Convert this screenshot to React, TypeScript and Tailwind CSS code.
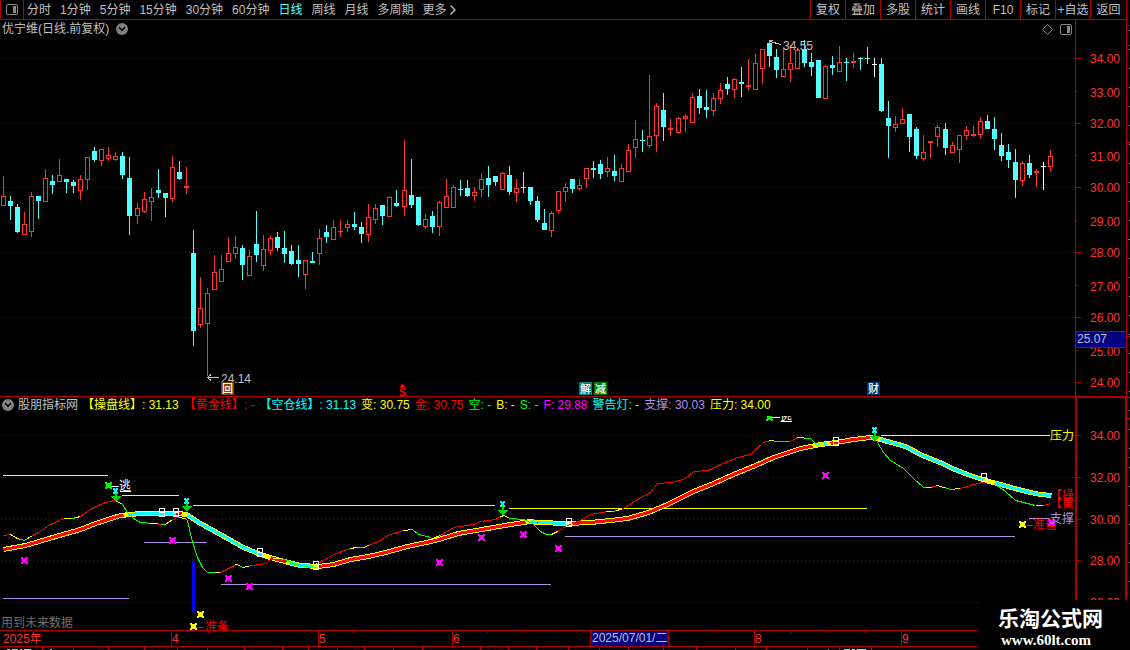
import { ChevronDown, ChevronRight } from "lucide-react";

type Point = [number, number];
type Segment = [number, number, string];
// x, high, low, body top, body bottom, kind (u = up, d = down, f = flat)
type Candle = [number, number, number, number, number, "u" | "d" | "f"];

const RED = "#ff3232";
const LINE = "#b00000";
const CYAN = "#54ffff";
const VIOLET = "#b090e8";

const periods = [
  "分时",
  "1分钟",
  "5分钟",
  "15分钟",
  "30分钟",
  "60分钟",
  "日线",
  "周线",
  "月线",
  "多周期",
];

const tools = ["复权", "叠加", "多股", "统计", "画线", "F10", "标记", "+自选", "返回"];

const readings = [
  { label: "【操盘线】", value: "31.13", color: "text-[#ffff00]" },
  { label: "【黄金线】", value: "-", color: "text-[#ff0000]" },
  { label: "【空仓线】", value: "31.13", color: "text-[#00ffff]" },
  { label: "变", value: "30.75", color: "text-[#ffff00]" },
  { label: "金", value: "30.75", color: "text-[#ff0000]" },
  { label: "空", value: "-", color: "text-[#00ff00]" },
  { label: "B", value: "-", color: "text-[#ffff00]" },
  { label: "S", value: "-", color: "text-[#00ff00]" },
  { label: "F", value: "29.88", color: "text-[#ff00ff]" },
  { label: "警告灯", value: "-", color: "text-[#00ffff]" },
  { label: "支撑", value: "30.03", color: "text-[#b090e8]" },
  { label: "压力", value: "34.00", color: "text-[#ffff00]" },
];

const candles: Candle[] = [
  [3, 176, 206, 196, 206, "u"],
  [10, 196, 220, 201, 206, "d"],
  [17, 204, 233, 207, 232, "d"],
  [24, 212, 235, 224, 235, "u"],
  [31, 192, 237, 196, 232, "u"],
  [38, 196, 219, 196, 201, "d"],
  [45, 169, 202, 178, 202, "u"],
  [52, 175, 194, 181, 185, "d"],
  [59, 159, 182, 175, 182, "u"],
  [66, 179, 193, 179, 182, "d"],
  [73, 180, 193, 182, 186, "d"],
  [80, 175, 200, 179, 191, "u"],
  [87, 157, 190, 157, 180, "u"],
  [94, 147, 162, 151, 160, "d"],
  [101, 149, 166, 149, 161, "u"],
  [108, 147, 161, 155, 159, "u"],
  [115, 152, 161, 156, 160, "u"],
  [122, 152, 179, 156, 175, "d"],
  [129, 157, 235, 178, 216, "d"],
  [137, 203, 224, 208, 216, "u"],
  [144, 192, 213, 199, 212, "u"],
  [151, 188, 221, 197, 202, "u"],
  [158, 169, 198, 190, 193, "d"],
  [165, 193, 217, 193, 198, "d"],
  [172, 156, 202, 167, 199, "u"],
  [179, 161, 180, 172, 179, "d"],
  [186, 167, 194, 186, 188, "u"],
  [193, 230, 346, 253, 331, "d"],
  [200, 277, 328, 308, 325, "u"],
  [207, 288, 376, 293, 324, "u"],
  [214, 255, 290, 272, 290, "u"],
  [221, 255, 282, 269, 282, "u"],
  [228, 237, 262, 253, 262, "u"],
  [235, 236, 259, 247, 254, "u"],
  [242, 245, 280, 248, 265, "d"],
  [249, 250, 276, 256, 276, "u"],
  [256, 211, 262, 244, 255, "d"],
  [263, 235, 271, 249, 266, "u"],
  [270, 236, 255, 238, 251, "u"],
  [277, 232, 251, 237, 248, "d"],
  [284, 231, 263, 248, 254, "d"],
  [291, 245, 265, 251, 264, "d"],
  [298, 245, 277, 260, 264, "d"],
  [305, 260, 289, 260, 275, "u"],
  [312, 252, 263, 261, 263, "d"],
  [319, 229, 265, 238, 254, "u"],
  [326, 225, 243, 232, 237, "d"],
  [333, 220, 240, 227, 240, "u"],
  [340, 220, 237, 231, 232, "u"],
  [347, 220, 232, 224, 228, "u"],
  [354, 212, 230, 224, 227, "d"],
  [361, 222, 243, 227, 234, "d"],
  [368, 204, 242, 217, 235, "u"],
  [375, 204, 224, 208, 220, "u"],
  [382, 205, 225, 205, 216, "d"],
  [389, 196, 217, 197, 217, "u"],
  [396, 190, 207, 203, 206, "d"],
  [404, 140, 216, 190, 207, "u"],
  [411, 159, 208, 195, 205, "d"],
  [418, 197, 226, 197, 225, "d"],
  [425, 214, 229, 219, 227, "u"],
  [432, 211, 233, 216, 227, "d"],
  [439, 201, 236, 202, 227, "u"],
  [446, 179, 208, 196, 208, "u"],
  [453, 185, 208, 187, 208, "u"],
  [460, 180, 196, 189, 190, "d"],
  [467, 180, 197, 188, 196, "d"],
  [474, 187, 201, 192, 196, "u"],
  [481, 173, 197, 179, 190, "u"],
  [488, 166, 197, 178, 185, "d"],
  [495, 176, 186, 176, 182, "d"],
  [502, 172, 190, 173, 190, "u"],
  [509, 166, 195, 175, 192, "d"],
  [516, 179, 202, 188, 193, "u"],
  [523, 172, 193, 187, 188, "d"],
  [530, 187, 205, 187, 201, "d"],
  [537, 196, 222, 201, 220, "d"],
  [544, 209, 230, 223, 230, "d"],
  [551, 211, 237, 213, 231, "u"],
  [558, 191, 214, 191, 211, "u"],
  [565, 183, 202, 187, 192, "u"],
  [572, 179, 193, 179, 189, "d"],
  [579, 179, 191, 185, 189, "u"],
  [586, 168, 188, 168, 179, "u"],
  [593, 161, 178, 168, 170, "d"],
  [600, 160, 179, 164, 174, "d"],
  [607, 157, 177, 168, 172, "u"],
  [614, 155, 181, 171, 176, "d"],
  [621, 164, 182, 168, 182, "u"],
  [628, 144, 172, 150, 172, "u"],
  [635, 120, 158, 139, 148, "u"],
  [642, 130, 152, 140, 141, "d"],
  [649, 75, 148, 136, 146, "u"],
  [656, 103, 152, 106, 136, "u"],
  [663, 93, 141, 110, 127, "d"],
  [670, 119, 136, 128, 130, "u"],
  [678, 117, 134, 118, 133, "u"],
  [685, 114, 132, 116, 119, "u"],
  [692, 93, 123, 97, 123, "u"],
  [699, 89, 114, 96, 108, "d"],
  [706, 90, 118, 107, 110, "d"],
  [713, 93, 116, 98, 111, "u"],
  [720, 83, 104, 90, 99, "u"],
  [727, 77, 95, 84, 89, "d"],
  [734, 78, 98, 79, 90, "u"],
  [741, 67, 97, 82, 84, "d"],
  [748, 59, 90, 85, 87, "u"],
  [755, 54, 90, 63, 90, "u"],
  [762, 49, 84, 49, 69, "u"],
  [769, 41, 67, 43, 56, "d"],
  [776, 49, 78, 57, 70, "d"],
  [783, 47, 77, 69, 77, "u"],
  [790, 45, 82, 63, 70, "u"],
  [797, 48, 69, 50, 69, "u"],
  [804, 40, 67, 49, 63, "d"],
  [811, 53, 76, 62, 67, "d"],
  [818, 60, 98, 60, 98, "d"],
  [825, 65, 99, 66, 99, "u"],
  [832, 56, 75, 65, 68, "d"],
  [839, 46, 72, 62, 72, "u"],
  [846, 58, 81, 62, 63, "d"],
  [853, 53, 68, 61, 63, "u"],
  [860, 57, 70, 58, 59, "d"],
  [867, 47, 64, 58, 59, "d"],
  [874, 58, 77, 64, 65, "f"],
  [881, 58, 112, 64, 111, "d"],
  [888, 101, 158, 118, 126, "d"],
  [895, 116, 132, 124, 128, "u"],
  [902, 108, 124, 119, 124, "u"],
  [909, 114, 152, 114, 137, "d"],
  [916, 127, 159, 129, 156, "d"],
  [923, 135, 161, 152, 159, "u"],
  [930, 141, 158, 141, 143, "u"],
  [937, 125, 147, 127, 137, "u"],
  [945, 123, 155, 129, 148, "d"],
  [952, 142, 153, 145, 153, "u"],
  [959, 135, 163, 135, 150, "u"],
  [966, 126, 140, 130, 136, "u"],
  [973, 126, 137, 134, 136, "u"],
  [980, 117, 139, 121, 135, "u"],
  [987, 115, 129, 121, 129, "d"],
  [994, 117, 150, 129, 139, "d"],
  [1001, 133, 161, 145, 156, "d"],
  [1008, 144, 168, 152, 160, "d"],
  [1015, 149, 198, 162, 180, "d"],
  [1022, 161, 186, 163, 181, "u"],
  [1029, 155, 178, 163, 175, "d"],
  [1036, 169, 187, 171, 173, "u"],
  [1043, 162, 190, 166, 167, "f"],
  [1050, 150, 172, 156, 167, "u"],
];

const trend: Point[] = [
  [3, 549], [25, 545], [52, 537], [80, 529], [95, 523], [120, 515], [130, 514],
  [140, 513], [178, 513], [186, 514], [200, 523], [220, 534], [243, 547],
  [260, 554], [273, 558], [288, 562], [300, 565], [318, 566], [333, 564],
  [350, 559], [368, 556], [385, 552], [407, 546], [435, 540], [458, 533],
  [487, 528], [510, 524], [530, 521], [537, 522], [568, 523], [590, 522],
  [610, 520], [627, 518], [648, 512], [667, 504], [693, 491], [713, 483],
  [733, 474], [755, 465], [773, 457], [800, 448], [820, 444], [836, 442],
  [853, 439], [870, 437], [880, 439], [905, 446], [922, 455], [942, 463],
  [952, 468], [967, 474], [985, 480], [1000, 484], [1018, 489], [1030, 492],
  [1040, 494], [1051, 495],
];

const trendCore: Segment[] = [
  [3, 123, "#ff0000"],
  [128, 175, "#00ffff"],
  [175, 181, "#ff0000"],
  [187, 262, "#00ffff"],
  [270, 286, "#ff0000"],
  [290, 316, "#00ffff"],
  [318, 525, "#ff0000"],
  [530, 566, "#00ffff"],
  [572, 812, "#ff0000"],
  [818, 826, "#00ffff"],
  [830, 870, "#ff0000"],
  [880, 983, "#00ffff"],
  [994, 1051, "#00ffff"],
];

const signal: Point[] = [
  [3, 535], [10, 534], [17, 538], [24, 540], [32, 535], [38, 532], [50, 524],
  [63, 518], [72, 518], [80, 516], [90, 509], [100, 504], [108, 501],
  [115, 500], [122, 504], [127, 512], [133, 518], [140, 522], [152, 523],
  [162, 524], [165, 524], [172, 519], [177, 517], [185, 518], [187, 520],
  [191, 538], [197, 557], [202, 567], [207, 572], [220, 572], [228, 568],
  [236, 564], [243, 567], [250, 565], [262, 564], [272, 558], [280, 558],
  [287, 560], [295, 564], [310, 567], [315, 564], [323, 560], [333, 554],
  [347, 549], [355, 547], [363, 547], [370, 544], [380, 540], [387, 535],
  [403, 530], [412, 529], [418, 534], [427, 536], [432, 538], [440, 535],
  [453, 527], [460, 526], [473, 524], [480, 521], [495, 519], [503, 515],
  [510, 518], [523, 519], [532, 523], [540, 531], [546, 534], [551, 534],
  [557, 531], [567, 525], [580, 520], [590, 514], [607, 511], [613, 511],
  [623, 508], [637, 499], [650, 492], [657, 483], [672, 482], [685, 478],
  [693, 471], [708, 470], [720, 464], [737, 457], [750, 454], [763, 442],
  [770, 440], [777, 441], [790, 441], [797, 437], [810, 438], [817, 445],
  [827, 443], [877, 442], [883, 452], [890, 460], [903, 468], [913, 478],
  [923, 487], [930, 487], [937, 485], [950, 489], [960, 488], [977, 483],
  [987, 481], [995, 484], [1005, 491], [1015, 500], [1023, 502],
  [1035, 505], [1043, 505], [1050, 503],
];

const signalParts: Segment[] = [
  [3, 10, "#ff0000"], [10, 20, "#ffff00"], [20, 27, "#00ff00"],
  [27, 31, "#ffff00"], [31, 63, "#ff0000"], [63, 70, "#ffff00"],
  [70, 75, "#00ff00"], [75, 80, "#ffff00"], [80, 115, "#ff0000"],
  [115, 122, "#ffff00"], [122, 150, "#00ff00"], [150, 157, "#ffff00"],
  [157, 161, "#ff0000"], [161, 164, "#00ff00"], [164, 172, "#ffff00"],
  [172, 178, "#ff0000"], [178, 186, "#ffff00"], [186, 214, "#00ff00"],
  [214, 220, "#ffff00"], [220, 235, "#ff0000"], [235, 239, "#ffff00"],
  [239, 243, "#00ff00"], [243, 249, "#ffff00"], [249, 272, "#ff0000"],
  [272, 282, "#ffff00"], [282, 312, "#00ff00"], [312, 317, "#ffff00"],
  [317, 350, "#ff0000"], [350, 357, "#ffff00"], [357, 363, "#00ff00"],
  [363, 368, "#ffff00"], [368, 403, "#ff0000"], [403, 410, "#ffff00"],
  [410, 432, "#00ff00"], [432, 440, "#ffff00"], [440, 500, "#ff0000"],
  [500, 508, "#ffff00"], [508, 550, "#00ff00"], [550, 558, "#ffff00"],
  [558, 606, "#ff0000"], [606, 611, "#ffff00"], [611, 616, "#00ff00"],
  [616, 621, "#ffff00"], [621, 768, "#ff0000"], [768, 774, "#ffff00"],
  [774, 788, "#00ff00"], [788, 797, "#ff0000"], [797, 805, "#ffff00"],
  [805, 817, "#00ff00"], [817, 823, "#ffff00"], [877, 925, "#00ff00"],
  [925, 932, "#ffff00"], [932, 936, "#ff0000"], [936, 946, "#ffff00"],
  [946, 953, "#00ff00"], [953, 960, "#ffff00"], [960, 985, "#ff0000"],
  [985, 995, "#ffff00"], [995, 1035, "#00ff00"], [1035, 1043, "#ffff00"],
  [1043, 1050, "#ff0000"],
];

// y, from, to, color
const levels: [number, number, number, string][] = [
  [475, 3, 108, "#ffff00"],
  [495, 122, 179, "#ffff00"],
  [505, 193, 495, "#ffff00"],
  [508, 509, 867, "#ffff00"],
  [435, 881, 1050, "#ffff00"],
  [598, 3, 129, VIOLET],
  [542, 144, 207, VIOLET],
  [584, 221, 551, VIOLET],
  [536, 565, 1015, VIOLET],
  [518, 1029, 1050, VIOLET],
];

const crosses: [number, number, string][] = [
  [24, 560, "#ff00ff"],
  [172, 540, "#ff00ff"],
  [228, 578, "#ff00ff"],
  [249, 586, "#ff00ff"],
  [439, 562, "#ff00ff"],
  [481, 537, "#ff00ff"],
  [523, 534, "#ff00ff"],
  [558, 548, "#ff00ff"],
  [825, 475, "#ff00ff"],
  [1051, 522, "#ff00ff"],
  [108, 485, "#00ff00"],
  [769, 417, "#00ff00"],
  [200, 614, "#ffff00"],
  [193, 626, "#ffff00"],
  [1022, 524, "#ffff00"],
];

// x, arrow y, cyan mark y
const sells: [number, number, number][] = [
  [116, 497, 491],
  [187, 507, 501],
  [503, 511, 504],
  [875, 437, 430],
];

const flips: Point[] = [
  [159, 508], [173, 508], [257, 548], [313, 561], [566, 518], [833, 437], [981, 473],
];

const events = [
  { x: 221, text: "回", fill: "#804000" },
  { x: 579, text: "解", fill: "#008080" },
  { x: 594, text: "减", fill: "#008000" },
  { x: 867, text: "财", fill: "#003366" },
];

const months = [
  { x: 171, text: "4" },
  { x: 318, text: "5" },
  { x: 452, text: "6" },
  { x: 754, text: "8" },
  { x: 901, text: "9" },
];

const weekTicks = [208, 245, 281, 352, 385, 419, 487, 522, 557, 673, 714, 791, 828, 864];
const stripTicks = [
  42, 73, 108, 144, 177, 207, 244, 282, 308, 337, 364, 393, 422, 480, 508, 536, 568, 599,
  628, 663, 696, 735, 766, 807, 839, 871,
];

function slice(points: Point[], from: number, to: number) {
  const at = (x: number): Point => {
    const i = Math.max(1, points.findIndex((p) => p[0] >= x));
    const [x0, y0] = points[i - 1];
    const [x1, y1] = points[i];
    return [x, y0 + ((y1 - y0) * (x - x0)) / (x1 - x0)];
  };
  return [at(from), ...points.filter((p) => p[0] > from && p[0] < to), at(to)]
    .map((p) => p.join(","))
    .join(" ");
}

function CandleShape({ data }: { data: Candle }) {
  const [x, high, low, top, bottom, kind] = data;
  const color = kind === "u" ? RED : kind === "d" ? CYAN : "#ffffff";
  const hollow = kind === "u" && bottom - top > 2;
  return (
    <g fill={color}>
      <rect x={x} y={high} width={1} height={top - high} />
      <rect x={x} y={bottom} width={1} height={low - bottom} />
      {hollow ? (
        <rect
          x={x - 1.5}
          y={top + 0.5}
          width={4}
          height={bottom - top - 1}
          fill="none"
          stroke={color}
        />
      ) : (
        <rect x={x - 2} y={top} width={5} height={bottom - top} />
      )}
    </g>
  );
}

function Grid({ rows }: { rows: number[] }) {
  return (
    <>
      {rows.map((y) => (
        <line
          key={y}
          x1={1}
          x2={1075}
          y1={y + 0.5}
          y2={y + 0.5}
          stroke="#a80000"
          strokeDasharray="1 3"
        />
      ))}
    </>
  );
}

function PriceChart() {
  const major = [58, 123, 187, 252, 317, 382];
  const minor = [91, 155, 220, 285, 350];
  return (
    <svg
      viewBox="0 38 1126 359"
      className="block w-full text-[12px]"
      shapeRendering="crispEdges"
      role="img"
      aria-label="日线"
    >
      <Grid rows={major} />
      {candles.map((c) => (
        <CandleShape key={c[0]} data={c} />
      ))}

      {/* high and low callouts */}
      <g fill="none" stroke="#c0c0c0">
        <path d="M207 377.5H219M211 374.5L207.5 377.5L211 380.5" />
        <path d="M769.5 44V40.5H773M770 41.5L781 44.5" />
      </g>
      <text x={221} y={383} fill="#c0c0c0">24.14</text>
      <text x={783} y={50} fill="#c0c0c0">34.55</text>

      {/* event badges */}
      {events.map((e) => (
        <g key={e.x}>
          <rect x={e.x} y={382} width={13} height={13} fill={e.fill} />
          <text x={e.x + 1} y={393} fontSize={11} fontWeight={500} fill="#ffffff">
            {e.text}
          </text>
        </g>
      ))}
      <path d="M402 384h1v1h1v1h1v1h-5v-1h1v-1h1z" fill="#ff0000" />
      <text x={399} y={396} fontSize={11} fontWeight={700} fill="#ff0000">
        S
      </text>

      {/* price axis */}
      <rect x={1075} y={38} width={1} height={359} fill={LINE} />
      {major.map((y, i) => (
        <g key={y}>
          <rect x={1076} y={y} width={5} height={1} fill={LINE} />
          <text x={1090} y={y + 5} fill={RED}>{`${34 - i * 2}.00`}</text>
        </g>
      ))}
      {minor.map((y, i) => (
        <g key={y}>
          <rect x={1076} y={y} width={2} height={1} fill={LINE} />
          <text x={1090} y={y + 6} fill={RED}>{`${33 - i * 2}.00`}</text>
        </g>
      ))}
      <rect x={1075} y={331} width={51} height={17} fill={LINE} />
      <rect x={1076} y={332} width={50} height={15} fill="#000080" />
      <text x={1077} y={343} fill="#c0c0c0">25.07</text>
      <rect x={0} y={396} width={1126} height={1} fill={LINE} />
    </svg>
  );
}

function IndicatorChart() {
  const major = [435, 477, 519, 560, 602];
  return (
    <svg
      viewBox="0 412 1126 238"
      className="block w-full text-[12px]"
      shapeRendering="crispEdges"
      role="img"
      aria-label="股朋指标网"
    >
      <Grid rows={major} />
      {levels.map(([y, from, to, color]) => (
        <rect key={y} x={from} y={y} width={to - from} height={1} fill={color} />
      ))}
      <rect x={192} y={561} width={3} height={51} fill="#0000ff" />

      <g fill="none" transform="translate(0.5 0.5)">
        <polyline points={slice(trend, 3, 1051)} stroke="#ffff00" strokeWidth={5} />
        {trendCore.map(([from, to, color]) => (
          <polyline key={from} points={slice(trend, from, to)} stroke={color} strokeWidth={3} />
        ))}
        {signalParts.map(([from, to, color]) => (
          <polyline key={from} points={slice(signal, from, to)} stroke={color} />
        ))}
      </g>

      {flips.map(([x, y]) => (
        <path
          key={x}
          d={`M${x + 0.5} ${y + 0.5}h5v8h-5zM${x + 1} ${y + 4.5}h4`}
          fill="none"
          stroke="#ffffff"
        />
      ))}

      {/* annotations */}
      <path d="M111 486.5h8M120 491.5h11M771 417.5h9M781 421.5h11" stroke="#ffffff" />
      <text x={119} y={490} fill="#ffffff">逃</text>
      <text x={780} y={421} fill="#ffffff">逃</text>
      <path d="M196 627.5h8M1026 525.5h7" stroke="#ff0000" />
      <text x={205} y={631} fill="#ff0000">准备</text>
      <text x={1033} y={529} fill="#ff0000">准备</text>
      <text x={1050} y={440} fill="#ffff00">压力</text>
      <text x={1050} y={500} fill="#ff0000">【操盘线】</text>
      <text x={1050} y={508} fill="#ff0000">【黄金线】</text>
      <text x={1} y={627} fill="#707070">用到未来数据</text>

      {crosses.map(([x, y, color]) => (
        <path
          key={`${x}-${y}`}
          transform={`translate(${x} ${y})`}
          d="M-3-3h2v1h3v-1h2v2h-1v3h1v2h-2v-1h-3v1h-2v-2h1v-3h-1z"
          fill={color}
        />
      ))}
      <text x={1050} y={523} fill={VIOLET}>支撑</text>
      {sells.map(([x, y, mark]) => (
        <g key={x}>
          <path transform={`translate(${x} ${y})`} d="M-1-5h2v4h4l-5 6-5-6h4z" fill="#00d800" />
          <path
            transform={`translate(${x - 1} ${mark})`}
            d="M-2-3h2v1h1v-1h2v2h-1v2h1v2h-2v-1h-1v1h-2v-2h1v-2h-1z"
            fill="#00ffff"
          />
        </g>
      ))}

      {/* value axis */}
      <rect x={0} y={412} width={1075} height={4} fill="#000000" />
      <rect x={1075} y={412} width={51} height={218} fill="#000000" />
      <rect x={1075} y={412} width={2} height={218} fill={LINE} />
      <rect x={1125} y={412} width={1} height={218} fill={LINE} />
      {major.map((y, i) => (
        <g key={y}>
          <rect x={1077} y={y} width={4} height={1} fill={LINE} />
          <rect x={1077} y={y + 21} width={1} height={1} fill={LINE} />
          <text x={1090} y={y + 5} fill={RED}>{`${34 - i * 2}.00`}</text>
        </g>
      ))}

      {/* time axis */}
      <rect x={0} y={630} width={1126} height={20} fill="#000000" />
      <rect x={0} y={630} width={1126} height={1} fill={LINE} />
      <rect x={0} y={646} width={1126} height={1} fill={LINE} />
      <text x={3} y={643} fill={RED}>2025年</text>
      {months.map((m) => (
        <g key={m.x}>
          <rect x={m.x} y={631} width={1} height={15} fill={LINE} />
          <text x={m.x + 1} y={643} fill={RED}>{m.text}</text>
        </g>
      ))}
      {weekTicks.map((x) => (
        <rect key={x} x={x} y={631} width={1} height={2} fill={LINE} />
      ))}
      <rect x={590} y={631} width={79} height={15} fill={LINE} />
      <rect x={591} y={631} width={77} height={15} fill="#000080" />
      <text x={592} y={642} fill="#c0c0c0">2025/07/01/二</text>
      {stripTicks.map((x) => (
        <rect key={x} x={x} y={647} width={1} height={3} fill={LINE} />
      ))}
      <path d="M7 649.5h3M12 649.5h6M20 649.5h2M24 649.5h7M50 649.5h2M828 649.5h1" stroke="#c0c0c0" />
      <path d="M844 649.5h6M852 649.5h3M857 649.5h9" stroke={CYAN} />
    </svg>
  );
}

function PanelIcon({ className }: { className: string }) {
  return (
    <svg viewBox="0 0 12 11" className={className} aria-hidden="true">
      <rect x="0.5" y="0.5" width="11" height="10" rx="1.5" fill="none" stroke="currentColor" />
      <rect x="7" y="2" width="3" height="7" fill="currentColor" />
    </svg>
  );
}

function CollapseButton({ label }: { label: string }) {
  return (
    <button
      type="button"
      aria-label={label}
      className="flex size-3 shrink-0 items-center justify-center rounded-full bg-[#808080] text-black"
    >
      <ChevronDown className="size-[10px]" strokeWidth={4} />
    </button>
  );
}

export default function App() {
  return (
    <div className="relative flex min-h-screen overflow-hidden bg-black font-['Liberation_Sans','Noto_Sans_CJK_SC',sans-serif] text-[12px] leading-none text-[#c0c0c0]">
      <div className="min-w-0 flex-1">
        <header className="flex h-5 border-b border-[#b00000]">
          <button
            type="button"
            aria-label="侧栏"
            className="flex w-6 shrink-0 items-center justify-center border-x border-[#b00000] text-[#888888]"
          >
            <PanelIcon className="h-[11px] w-3" />
          </button>
          <nav className="flex items-center gap-[9px] pl-[3px] whitespace-nowrap">
            {periods.map((p) => (
              <button
                key={p}
                type="button"
                className={p === "日线" ? "text-[#54ffff]" : "text-[#c0c0c0]"}
              >
                {p}
              </button>
            ))}
            <button type="button" className="flex items-center">
              更多
              <ChevronRight className="-ml-[2px] size-4" strokeWidth={2} />
            </button>
          </nav>
          <div className="ml-auto flex">
            {tools.map((t) => (
              <button
                key={t}
                type="button"
                className="w-[35px] border-l border-[#b00000] text-center whitespace-nowrap last:w-9"
              >
                {t}
              </button>
            ))}
          </div>
        </header>

        <div className="flex h-[18px]">
          <div className="flex flex-1 items-center pr-[3px] pl-[2px]">
            <h1 className="mr-[7px]">优宁维(日线.前复权)</h1>
            <CollapseButton label="收起主图" />
            <svg viewBox="0 0 11 11" className="ml-auto size-[11px] text-[#888888]" aria-hidden="true">
              <path d="M5.5 0.5l5 5-5 5-5-5z" fill="none" stroke="currentColor" />
            </svg>
            <PanelIcon className="ml-[7px] h-[11px] w-3 text-[#888888]" />
          </div>
          <div className="w-[51px] border-l border-[#b00000]" />
        </div>

        <PriceChart />

        <div className="flex h-[15px]">
          <div className="flex flex-1 items-center gap-[4px] pt-px pl-[2px] whitespace-nowrap">
            <CollapseButton label="收起副图" />
            <h2>股朋指标网</h2>
            <dl className="flex gap-[5px]">
              {readings.map((r) => (
                <div key={r.label} className={`flex ${r.color}`}>
                  <dt className="whitespace-pre">{`${r.label}: `}</dt>
                  <dd>{r.value}</dd>
                </div>
              ))}
            </dl>
          </div>
          <div className="w-[51px] border-t border-r border-l-2 border-[#b00000]" />
        </div>

        <IndicatorChart />
      </div>

      <aside className="w-1 shrink-0 border-l border-[#b00000]">
        <svg width="3" height="600" className="block" shapeRendering="crispEdges" aria-hidden="true">
          {[25, 45, 142, 239, 336, 397, 418, 457].map((y) => (
            <rect key={y} x="0" y={y} width="3" height="1" fill={LINE} />
          ))}
          <path d="M2.5 30V600" stroke="#c0c0c0" strokeDasharray="1 18" />
        </svg>
      </aside>

      {/* site mark lies over the lower right corner */}
      <a
        href="#"
        className="absolute right-0 bottom-0 flex h-[50px] w-[152px] flex-col gap-1 bg-black pt-2 pl-5 text-white"
      >
        <span className="text-[21px] leading-none font-bold">乐淘公式网</span>
        <span className="pl-[3px] font-['Liberation_Serif',serif] text-[15px] leading-none font-bold">
          www.60lt.com
        </span>
      </a>
    </div>
  );
}
